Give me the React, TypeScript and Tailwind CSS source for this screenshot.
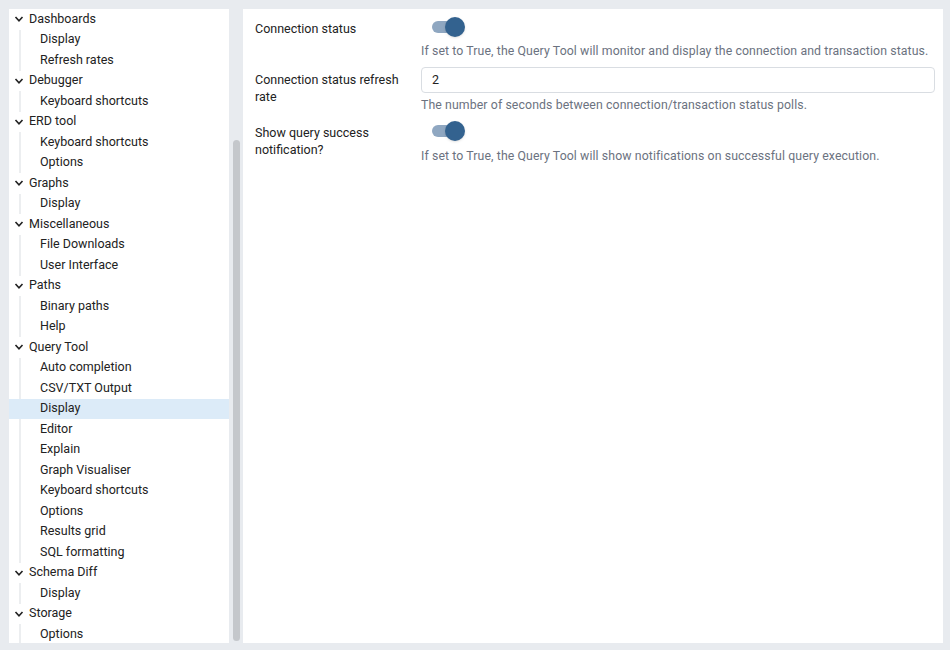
import React from "react";

const tree: [string, string[], number?][] = [
  ["Dashboards", ["Display", "Refresh rates"]],
  ["Debugger", ["Keyboard shortcuts"]],
  ["ERD tool", ["Keyboard shortcuts", "Options"]],
  ["Graphs", ["Display"]],
  ["Miscellaneous", ["File Downloads", "User Interface"]],
  ["Paths", ["Binary paths", "Help"]],
  ["Query Tool", ["Auto completion", "CSV/TXT Output", "Display", "Editor", "Explain", "Graph Visualiser", "Keyboard shortcuts", "Options", "Results grid", "SQL formatting"], 2],
  ["Schema Diff", ["Display"]],
  ["Storage", ["Options"]],
];

function Chevron() {
  return (
    <svg width="10" height="10" viewBox="0 0 10 10" className="mr-[5px]">
      <path d="M1.5 3 L5 6.8 L8.5 3" fill="none" stroke="#222" strokeWidth="1.6" />
    </svg>
  );
}

function Toggle() {
  return (
    <div className="relative w-[34px] h-[20px] flex items-center">
      <div className="w-[30px] h-[12px] rounded-full bg-[#8fa7c1] ml-[1px]" />
      <div className="absolute right-0 top-0 w-[20px] h-[20px] rounded-full bg-[#33628f] shadow" />
    </div>
  );
}

export default function App() {
  return (
    <div className="w-[950px] h-[650px] bg-[#e8ebef] flex pt-[9px] pl-[9px] pr-[7px] pb-[7px] text-[12.5px] text-[#222]" style={{ fontFamily: "Roboto, 'Liberation Sans', sans-serif" }}>
      <div className="w-[220px] bg-white pt-[0px] overflow-hidden">
        {tree.map(([p, kids, sel]) => (
          <div key={p}>
            <div className="h-[20.5px] flex items-center pl-[5px]"><Chevron />{p}</div>
            <div className="ml-[10px] border-l-2 border-[#eceef0]">
              {kids.map((k, i) => (
                <div key={i} className={`h-[20.5px] flex items-center pl-[19px] ${sel === i ? "bg-[#dcebf8] -ml-[12px] pl-[31px]" : ""}`}>{k}</div>
              ))}
            </div>
          </div>
        ))}
      </div>
      <div className="w-[15px] flex justify-center pt-[131px] pb-[2px]">
        <div className="w-[7px] h-full rounded-full bg-[#c4c7cb]" />
      </div>
      <div className="flex-1 bg-white ml-[-1px] pt-[8px] pr-[8px] pl-[12px]">
        <div className="flex">
          <div className="w-[166px] pt-[3px] leading-[17px]">Connection status</div>
          <div className="flex-1">
            <div className="ml-[10px] h-[20px]"><Toggle /></div>
            <div className="mt-[4px] text-[#6b7280] leading-[20px] text-[12.3px] tracking-[0.1px]">If set to True, the Query Tool will monitor and display the connection and transaction status.</div>
          </div>
        </div>
        <div className="flex mt-[6px]">
          <div className="w-[166px] pt-[4px] leading-[17px]">Connection status refresh rate</div>
          <div className="flex-1">
            <div className="h-[26px] border border-[#d9dde2] rounded-[4px] flex items-center px-[10px]">2</div>
            <div className="mt-[2px] text-[#6b7280] leading-[20px] text-[12.3px] tracking-[0.1px]">The number of seconds between connection/transaction status polls.</div>
          </div>
        </div>
        <div className="flex mt-[6px]">
          <div className="w-[166px] pt-[3px] leading-[17px]">Show query success notification?</div>
          <div className="flex-1">
            <div className="ml-[10px] h-[20px]"><Toggle /></div>
            <div className="mt-[5px] text-[#6b7280] leading-[20px] text-[12.3px] tracking-[0.1px]">If set to True, the Query Tool will show notifications on successful query execution.</div>
          </div>
        </div>
      </div>
    </div>
  );
}
